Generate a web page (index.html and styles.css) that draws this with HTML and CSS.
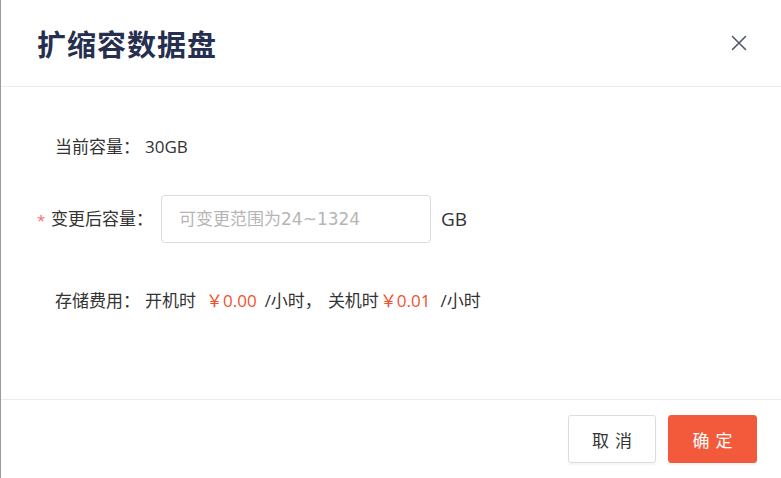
FILE: index.html
```html
<!DOCTYPE html>
<html lang="zh-CN">
<head>
<meta charset="utf-8">
<title>扩缩容数据盘</title>
<link rel="stylesheet" href="styles.css">
</head>
<body>
<div class="dialog">
  <header class="dialog-header">
    <h1 class="dialog-title">扩缩容数据盘</h1>
    <button class="close-btn" aria-label="关闭">
      <svg width="16" height="16" viewBox="0 0 16 16"><path d="M1.5 1.5 L14.5 14.5 M14.5 1.5 L1.5 14.5" stroke="#50566b" stroke-width="1.6" fill="none" stroke-linecap="round"/></svg>
    </button>
  </header>
  <main class="dialog-body">
    <div class="row row-plain">当前容量：<span class="value">30GB</span></div>
    <div class="row row-form">
      <span class="required">*</span>
      <label class="label">变更后容量：</label>
      <input class="input" type="text" placeholder="可变更范围为24~1324">
      <span class="unit">GB</span>
    </div>
    <div class="row row-plain row-fee">存储费用：<span class="value">开机时</span><span class="price price-first">￥0.00</span><span class="per">/小时，</span><span class="per-gap">关机时</span><span class="price">￥0.01</span><span class="per per-last">/小时</span></div>
  </main>
  <footer class="dialog-footer">
    <button class="btn btn-default">取消</button>
    <button class="btn btn-primary">确定</button>
  </footer>
</div>
</body>
</html>
```
FILE: styles.css
```css
html, body {
  margin: 0;
  padding: 0;
  background: #fff;
}
body {
  font-family: "Open Sans", "Noto Sans CJK SC", sans-serif;
  color: #333;
}
.dialog {
  width: 781px;
  height: 478px;
  box-sizing: border-box;
  border-left: 1px solid #9b9b9b;
  display: flex;
  flex-direction: column;
  background: #fff;
}
.dialog-header {
  box-sizing: border-box;
  border-bottom: 1px solid #ebebeb;
  display: flex;
  align-items: center;
  justify-content: space-between;
  padding: 0 34px 0 36px;
  flex: none;
  height: 87px;
}
.dialog-title {
  margin: 0;
  font-family: "Noto Sans CJK SC", sans-serif;
  font-size: 29px;
  font-weight: 700;
  color: #262f4f;
  letter-spacing: 1px;
  line-height: 40px;
  padding-bottom: 1px;
}
.close-btn {
  border: 0;
  background: transparent;
  padding: 0;
  width: 16px;
  height: 16px;
  display: flex;
  cursor: pointer;
}
.dialog-body {
  flex: 1;
  padding: 48px 0 0 36px;
  font-size: 17px;
}
.row {
  display: flex;
  align-items: center;
  line-height: 24px;
  white-space: nowrap;
}
.row-plain {
  padding-left: 18px;
}
.value {
  margin-left: 5px;
}
.row-form {
  margin-top: 36px;
}
.row-fee {
  margin-top: 46px;
}
.required {
  color: #f56c6c;
  font-size: 15px;
  width: 14px;
  padding-top: 2px;
}
.label {
  margin-right: 8px;
}
.input {
  width: 270px;
  height: 48px;
  box-sizing: border-box;
  border: 1px solid #dcdcdc;
  border-radius: 4px;
  padding: 0 17px;
  font-family: "DejaVu Sans", "Noto Sans CJK SC", sans-serif;
  font-size: 17px;
  color: #333;
  outline: none;
}
.input::placeholder {
  color: #b5b5b5;
}
.unit {
  margin-left: 10px;
  font-size: 19px;
}
.price {
  color: #f2512f;
  margin-left: 1px;
}
.price-first {
  margin-left: 10px;
}
.per {
  margin-left: 8px;
}
.per-last {
  margin-left: 10px;
}
.per-gap {
  margin-left: 6px;
}
.dialog-footer {
  flex: none;
  height: 79px;
  box-sizing: border-box;
  border-top: 1px solid #ebebeb;
  display: flex;
  justify-content: flex-end;
  align-items: center;
  gap: 12px;
  padding: 0 24px 0 0;
}
.btn {
  height: 48px;
  box-sizing: border-box;
  border-radius: 3px;
  font-family: "Noto Sans CJK SC", sans-serif;
  font-size: 17px;
  letter-spacing: 6px;
  text-indent: 6px;
  cursor: pointer;
}
.btn-default {
  width: 88px;
  background: #fff;
  border: 1px solid #dcdcdc;
  color: #333;
  box-shadow: 0 2px 2px rgba(0,0,0,0.04);
}
.btn-primary {
  width: 89px;
  background: #f35a3c;
  border: 1px solid #f35a3c;
  color: #fff;
  box-shadow: 0 2px 2px rgba(0,0,0,0.05);
}
```
